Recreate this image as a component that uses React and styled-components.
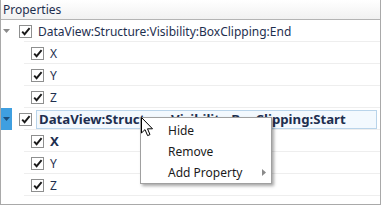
import React from "react";
import styled, { createGlobalStyle } from "styled-components";

const GlobalStyle = createGlobalStyle`
  html, body {
    margin: 0;
    padding: 0;
    background: #ffffff;
  }
  body {
    font-family: "Noto Sans", "Open Sans", sans-serif;
  }
`;

const Panel = styled.div`
  position: relative;
  width: 381px;
  height: 205px;
  box-sizing: border-box;
  border: 1px solid #a9a9a9;
  border-top: none;
  background: #ffffff;
  overflow: hidden;
`;

const Header = styled.div`
  height: 19px;
  border-bottom: 1px solid #b4b4b4;
  background: linear-gradient(#ffffff, #f1f1f1);
  display: flex;
  align-items: center;
  padding-left: 2px;
  font-size: 12px;
  color: #1e2f4f;
`;

const List = styled.div`
  display: flex;
  flex-direction: column;
`;

const Row = styled.div`
  height: 22px;
  display: flex;
  align-items: center;
  background: linear-gradient(#eeeeee, #eeeeee) no-repeat 23px 100% / calc(100% - 23px) 1px;
`;

const Expander = styled.div`
  width: 11px;
  height: 22px;
  flex: none;
  display: flex;
  align-items: center;
  justify-content: center;
  background: ${(p) => (p.$active ? "#3f9fe0" : "transparent")};
`;

const Indent = styled.div`
  width: ${(p) => p.$width}px;
  flex: none;
`;

const Check = styled.div`
  width: 11px;
  height: 11px;
  flex: none;
  border: 1px solid #8e8f8f;
  background: #ffffff;
  display: flex;
  align-items: center;
  justify-content: center;
`;

const Label = styled.div`
  margin-left: ${(p) => (p.$boxed ? 4 : 6)}px;
  font-size: ${(p) => (p.$bold ? "13.2px" : "12px")};
  font-weight: ${(p) => (p.$bold ? 700 : 400)};
  color: #1e2f4f;
  white-space: nowrap;
  ${(p) =>
    p.$boxed &&
    `
    flex: 1;
    margin-right: 3px;
    height: 19px;
    box-sizing: border-box;
    padding-left: 2px;
    border: 1px solid #b9d4ea;
    background: #f3f9fe;
    display: flex;
    align-items: center;
  `}
`;

const Menu = styled.div`
  position: absolute;
  left: 139px;
  top: 117px;
  width: 132px;
  box-sizing: border-box;
  padding: 2px 0 0;
  background: #ffffff;
  border: 1px solid #a0a0a0;
  box-shadow: 2px 2px 3px rgba(0, 0, 0, 0.35);
  display: flex;
  flex-direction: column;
`;

const MenuItem = styled.div`
  height: 21px;
  display: flex;
  align-items: center;
  justify-content: space-between;
  padding: 0 5px 0 27px;
  font-size: 12px;
  color: #1b1b1b;
`;

const Cursor = styled.svg`
  position: absolute;
  left: 140px;
  top: 117px;
`;

const Arrow = ({ active }) => (
  <svg width="7" height="4" viewBox="0 0 7 4">
    <path d="M0 0 L7 0 L3.5 4 Z" fill={active ? "#1b4e7c" : "#8a8a8a"} />
  </svg>
);

const Tick = () => (
  <svg width="10" height="9" viewBox="0 0 10 9">
    <path
      d="M1.2 4.6 L3.6 7.2 L8.6 1.2"
      fill="none"
      stroke="#1a1a1a"
      strokeWidth="1.9"
    />
  </svg>
);

const groups = [
  { name: "DataView:Structure:Visibility:BoxClipping:End", active: false, boldChild: null },
  { name: "DataView:Structure:Visibility:BoxClipping:Start", active: true, boldChild: "X" },
];

const App = () => {
  return (
    <>
      <GlobalStyle />
      <Panel>
        <Header>Properties</Header>
        <List>
          {groups.map((g) => (
            <React.Fragment key={g.name}>
              <Row>
                <Expander $active={g.active}>
                  <Arrow active={g.active} />
                </Expander>
                <Indent $width={7} />
                <Check>
                  <Tick />
                </Check>
                <Label $bold={g.active} $boxed={g.active}>
                  {g.name}
                </Label>
              </Row>
              {["X", "Y", "Z"].map((c) => (
                <Row key={c}>
                  <Indent $width={30} />
                  <Check>
                    <Tick />
                  </Check>
                  <Label $bold={g.boldChild === c}>{c}</Label>
                </Row>
              ))}
            </React.Fragment>
          ))}
        </List>
        <Menu>
          <MenuItem>Hide</MenuItem>
          <MenuItem>Remove</MenuItem>
          <MenuItem>
            <span>Add Property</span>
            <svg width="4" height="7" viewBox="0 0 4 7">
              <path d="M0 0 L4 3.5 L0 7 Z" fill="#8a8a8a" />
            </svg>
          </MenuItem>
        </Menu>
        <Cursor width="13" height="20" viewBox="0 0 13 20">
          <path
            d="M0.5 0.5 L0.5 16 L4 12.6 L6.6 18.6 L9 17.6 L6.5 11.8 L11.5 11.8 Z"
            fill="#ffffff"
            stroke="#000000"
            strokeWidth="1"
            strokeLinejoin="round"
          />
        </Cursor>
      </Panel>
    </>
  );
};

export default App;
